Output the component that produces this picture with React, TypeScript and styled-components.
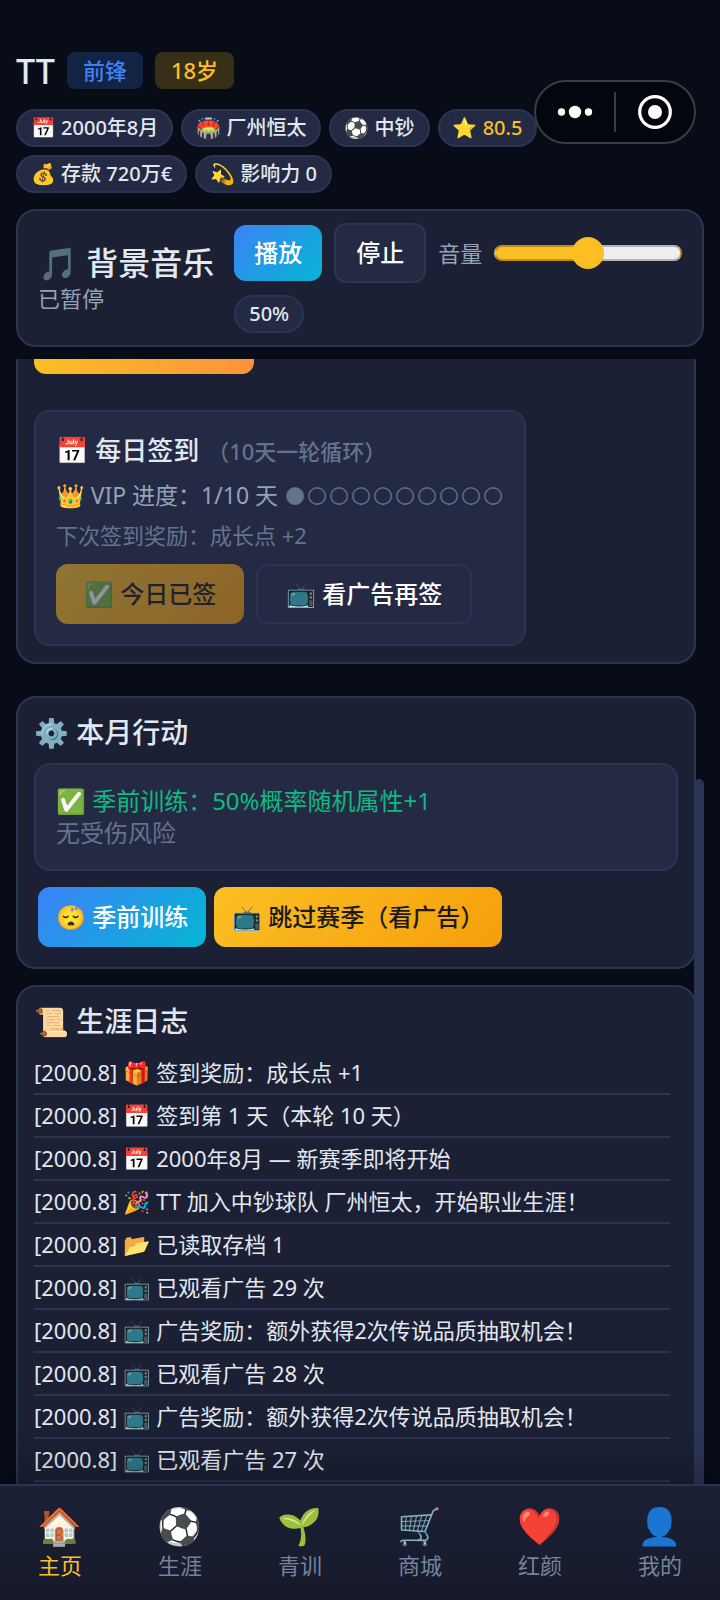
import { useState } from 'react'
import type { FC, ReactNode } from 'react'
import styled, { createGlobalStyle, css } from 'styled-components'

const GlobalStyle = createGlobalStyle`
  :root {
    --background: #080c17;
    --card: #1b2035;
    --card-raised: #242a44;
    --border: #2c3454;
    --text: #e2e8f0;
    --text-soft: #94a3b8;
    --text-muted: #64748b;
    --gold: #fbbf24;
    --blue: #3b82f6;
    --green: #10b981;
    --card-radius: 20px;
  }

  *, *::before, *::after {
    box-sizing: border-box;
  }

  body {
    background: var(--background);
    color: var(--text);
    font-family: "Noto Sans", "Noto Sans CJK SC", sans-serif;
    font-size: 22px;
    line-height: 30px;
    margin: 0;
  }

  button, input {
    font-family: inherit;
  }
`

const Shell = styled.div`
  display: flex;
  flex-direction: column;
  height: 100vh;
  overflow: hidden;
  position: relative;
`

const Emoji = styled.span`
  display: inline-block;
  font-family: "Noto Color Emoji", sans-serif;
  font-weight: 400;
  line-height: 1;
`

/* Header */

const Header = styled.header`
  display: grid;
  padding: 52px 16px 0;
  row-gap: 20px;
`

const PlayerRow = styled.div`
  align-items: center;
  column-gap: 12px;
  display: flex;
`

const PlayerName = styled.h1`
  font-size: 34px;
  font-weight: 500;
  line-height: 36px;
  margin: 0;
`

const Badge = styled.span<{ $tone: 'blue' | 'gold' }>`
  background: ${({ $tone }) => $tone === 'blue' ? '#3b82f633' : '#fbbf2433'};
  border-radius: 8px;
  color: ${({ $tone }) => $tone === 'blue' ? 'var(--blue)' : 'var(--gold)'};
  font-weight: 500;
  line-height: 37px;
  padding-inline: 16px;
`

const Chips = styled.div`
  display: flex;
  flex-wrap: wrap;
  gap: 8px;
  padding-inline-end: 160px;
`

const Chip = styled.span<{ $gold?: boolean }>`
  background: var(--card-raised);
  border: 2px solid var(--border);
  border-radius: 19px;
  color: ${({ $gold }) => $gold ? 'var(--gold)' : 'inherit'};
  font-size: 20px;
  font-weight: 500;
  line-height: 34px;
  padding-inline: 13px;
  white-space: nowrap;
`

const Capsule = styled.div`
  align-items: center;
  background: #04060d;
  border: 2px solid #3a3c44;
  border-radius: 32px;
  display: flex;
  height: 64px;
  position: absolute;
  right: 24px;
  top: 80px;
  width: 162px;
`

const CapsuleButton = styled.button`
  align-items: center;
  background: none;
  border: 0;
  color: #fff;
  display: flex;
  flex: 1;
  justify-content: center;
  padding: 0;

  & + & {
    border-inline-start: 2px solid #3a3c44;
  }
`

/* Buttons */

const buttonColors = {
  blue: css`
    background: linear-gradient(135deg, #3b82f6, #06b6d4);
    color: #fff;
  `,
  gold: css`
    background: linear-gradient(135deg, #fbbf24, #f59e0b);
    color: #1a1a1a;
  `,
  plain: css`
    background: var(--card-raised);
    border: 2px solid var(--border);
    color: #fff;
  `
}

const Button = styled.button<{ $color: keyof typeof buttonColors, $size?: 'medium' | 'wide' }>`
  border: 0;
  border-radius: 12px;
  font-size: 24px;
  font-weight: 500;
  line-height: 32px;
  min-height: 60px;
  padding: 12px ${({ $size }) => $size === 'wide' ? '28px' : '18px'};
  white-space: nowrap;
  ${({ $color }) => buttonColors[$color]}

  &:disabled {
    opacity: 0.5;
  }
`

/* Music */

const MusicCard = styled.section`
  align-items: center;
  background: var(--card);
  border: 2px solid var(--border);
  border-radius: var(--card-radius);
  column-gap: 20px;
  display: flex;
  margin: 16px 16px 12px;
  padding: 12px 20px;
`

const MusicTitle = styled.h2`
  font-size: 32px;
  font-weight: 500;
  line-height: 40px;
  margin: 0;
  white-space: nowrap;
`

const MusicState = styled.p`
  color: var(--text-soft);
  margin: 0;
`

const MusicControls = styled.div`
  align-items: center;
  display: flex;
  flex: 1;
  flex-wrap: wrap;
  gap: 12px;
`

const MusicButton = styled(Button)<{ $short?: boolean }>`
  min-height: ${({ $short }) => $short ? '56px' : '60px'};
  padding-inline: 20px;
`

const VolumeLabel = styled.label`
  color: var(--text-soft);
`

const VolumeSlider = styled.input`
  appearance: none;
  background: none;
  flex: 1 1 180px;
  height: 32px;
  margin: 0;
  min-width: 0;

  &::-webkit-slider-runnable-track {
    background: linear-gradient(to right, var(--gold) 50%, #efefef 50%);
    border: 2px solid #00000040;
    border-radius: 8px;
    height: 16px;
  }

  &::-webkit-slider-thumb {
    appearance: none;
    background: var(--gold);
    border-radius: 50%;
    height: 32px;
    margin-top: -10px;
    width: 32px;
  }
`

/* Content */

const Content = styled.main`
  flex: 1;
  min-height: 0;
  overflow: hidden;
  padding-inline: 16px 24px;
  position: relative;
`

const ScrollThumb = styled.div`
  background: var(--border);
  border-radius: 5px 5px 0 0;
  bottom: 0;
  position: absolute;
  right: 16px;
  top: 420px;
  width: 10px;
`

const Card = styled.section<{ $continued?: boolean }>`
  background: var(--card);
  border: 2px solid var(--border);
  border-radius: var(--card-radius);
  margin-block-end: 16px;
  padding: 16px;

  ${({ $continued }) => $continued && css`
    border-start-end-radius: 0;
    border-start-start-radius: 0;
    border-top: 0;
    margin-block-end: 32px;
    padding-block-start: 0;
  `}
`

const CardHeading = styled.h2`
  font-size: 28px;
  font-weight: 500;
  line-height: 37px;
  margin: 0 0 12px;
`

const RewardBar = styled.div`
  background: linear-gradient(100deg, #fbbf24, #fb923c);
  border-radius: 0 0 12px 12px;
  height: 15px;
  margin-block-end: 36px;
  width: 220px;
`

const Panel = styled.div<{ $fit?: boolean }>`
  background: var(--card-raised);
  border: 2px solid var(--border);
  border-radius: 16px;
  padding: 20px;
  width: ${({ $fit }) => $fit ? 'fit-content' : 'auto'};
`

const SignInHeading = styled.h3`
  font-size: 26px;
  font-weight: 500;
  line-height: 36px;
  margin: 0 0 9px;

  small {
    color: var(--text-muted);
    font-size: 22px;
    margin-inline-start: 8px;
  }
`

const Progress = styled.p`
  color: var(--text-soft);
  font-size: 23px;
  line-height: 34px;
  margin: 0 0 8px;
`

const Dot = styled.span`
  color: var(--text-muted);
  display: inline-block;
  font-family: "DejaVu Sans", sans-serif;
  line-height: 1;
  text-align: center;
  vertical-align: 2px;
  width: 22px;
`

const NextReward = styled.p`
  color: var(--text-muted);
  margin: 0 0 14px;
`

const SignInButtons = styled.div`
  column-gap: 12px;
  display: flex;
`

const ActionText = styled.p<{ $color: string }>`
  color: ${({ $color }) => $color};
  font-size: 24px;
  line-height: 32px;
  margin: 0;
`

const ActionButtons = styled.div`
  column-gap: 8px;
  display: flex;
  padding: 16px 4px 4px;
`

const LogList = styled.ul`
  list-style-type: none;
  margin: 0;
  padding: 0 8px 0 0;
`

const LogItem = styled.li`
  border-block-end: 2px solid var(--border);
  line-height: 29px;
  padding-block: 6px;
`

/* Navigation */

const Nav = styled.nav`
  background: linear-gradient(#1b2035, #161a2c);
  border-block-start: 2px solid var(--border);
  box-shadow: 0 -8px 40px 0 #00000050;
  display: flex;
  position: relative;
`

const NavLink = styled.a<{ $active: boolean }>`
  align-items: center;
  color: ${({ $active }) => $active ? 'var(--gold)' : '#76839a'};
  display: flex;
  flex: 1;
  flex-direction: column;
  line-height: 30px;
  padding-block: 18px 20px;
  text-decoration: none;
`

const NavIcon = styled(Emoji)`
  font-size: 36px;
  line-height: 46px;
`

const logs = [
  { icon: '🎁', text: '签到奖励：成长点 +1' },
  { icon: '📅', text: '签到第 1 天（本轮 10 天）' },
  { icon: '📅', text: '2000年8月 — 新赛季即将开始' },
  { icon: '🎉', text: 'TT 加入中钞球队 厂州恒太，开始职业生涯！' },
  { icon: '📂', text: '已读取存档 1' },
  { icon: '📺', text: '已观看广告 29 次' },
  { icon: '📺', text: '广告奖励：额外获得2次传说品质抽取机会！' },
  { icon: '📺', text: '已观看广告 28 次' },
  { icon: '📺', text: '广告奖励：额外获得2次传说品质抽取机会！' },
  { icon: '📺', text: '已观看广告 27 次' }
]

const pages = [
  { icon: '🏠', id: 'home', label: '主页' },
  { icon: '⚽', id: 'career', label: '生涯' },
  { icon: '🌱', id: 'youth', label: '青训' },
  { icon: '🛒', id: 'shop', label: '商城' },
  { icon: '❤️', id: 'love', label: '红颜' },
  { icon: '👤', id: 'me', label: '我的' }
]

const WithEmoji: FC<{ icon: string, children: ReactNode }> = ({ icon, children }) => (
  <>
    <Emoji aria-hidden="true">{icon}</Emoji> {children}
  </>
)

const PlayerHeader: FC = () => (
  <Header>
    <PlayerRow>
      <PlayerName>TT</PlayerName>
      <Badge $tone="blue">前锋</Badge>
      <Badge $tone="gold">18岁</Badge>
    </PlayerRow>
    <Chips>
      <Chip><WithEmoji icon="📅">2000年8月</WithEmoji></Chip>
      <Chip><WithEmoji icon="🏟️">厂州恒太</WithEmoji></Chip>
      <Chip><WithEmoji icon="⚽">中钞</WithEmoji></Chip>
      <Chip $gold><WithEmoji icon="⭐">80.5</WithEmoji></Chip>
      <Chip><WithEmoji icon="💰">存款 720万€</WithEmoji></Chip>
      <Chip><WithEmoji icon="💫">影响力 0</WithEmoji></Chip>
    </Chips>
  </Header>
)

const AppCapsule: FC = () => (
  <Capsule>
    <CapsuleButton aria-label="More" type="button">
      <svg fill="currentColor" height="40" viewBox="0 0 40 40" width="40">
        <circle cx="6.5" cy="20" r="3.7" />
        <circle cx="20" cy="20" r="6.2" />
        <circle cx="33.5" cy="20" r="3.7" />
      </svg>
    </CapsuleButton>
    <CapsuleButton aria-label="Close" type="button">
      <svg fill="none" height="40" viewBox="0 0 40 40" width="40">
        <circle cx="20" cy="20" r="15.3" stroke="currentColor" strokeWidth="3.2" />
        <circle cx="20" cy="20" fill="currentColor" r="7" />
      </svg>
    </CapsuleButton>
  </Capsule>
)

const MusicPlayer: FC = () => {
  const [volume, setVolume] = useState(50)

  return (
    <MusicCard>
      <div>
        <MusicTitle><WithEmoji icon="🎵">背景音乐</WithEmoji></MusicTitle>
        <MusicState>已暂停</MusicState>
      </div>
      <MusicControls>
        <MusicButton $color="blue" $short type="button">播放</MusicButton>
        <MusicButton $color="plain" type="button">停止</MusicButton>
        <VolumeLabel htmlFor="volume">音量</VolumeLabel>
        <VolumeSlider
          id="volume"
          max={100}
          min={0}
          onChange={(event) => setVolume(Number(event.target.value))}
          type="range"
          value={volume}
        />
        <Chip>{volume}%</Chip>
      </MusicControls>
    </MusicCard>
  )
}

const App: FC = () => (
  <>
    <GlobalStyle />
    <Shell>
      <PlayerHeader />
      <AppCapsule />
      <MusicPlayer />
      <Content>
        <Card $continued>
          <RewardBar />
          <Panel $fit>
            <SignInHeading>
              <WithEmoji icon="📅">每日签到</WithEmoji>
              <small>（10天一轮循环）</small>
            </SignInHeading>
            <Progress>
              <WithEmoji icon="👑">VIP 进度：1/10 天</WithEmoji>
              {' '}
              {[...'●○○○○○○○○○'].map((dot, index) => <Dot key={index}>{dot}</Dot>)}
            </Progress>
            <NextReward>下次签到奖励：成长点 +2</NextReward>
            <SignInButtons>
              <Button $color="gold" $size="wide" disabled type="button">
                <WithEmoji icon="✅">今日已签</WithEmoji>
              </Button>
              <Button $color="plain" $size="wide" type="button">
                <WithEmoji icon="📺">看广告再签</WithEmoji>
              </Button>
            </SignInButtons>
          </Panel>
        </Card>
        <Card>
          <CardHeading><WithEmoji icon="⚙️">本月行动</WithEmoji></CardHeading>
          <Panel>
            <ActionText $color="var(--green)">
              <WithEmoji icon="✅">季前训练：50%概率随机属性+1</WithEmoji>
            </ActionText>
            <ActionText $color="var(--text-muted)">无受伤风险</ActionText>
          </Panel>
          <ActionButtons>
            <Button $color="blue" type="button">
              <WithEmoji icon="😴">季前训练</WithEmoji>
            </Button>
            <Button $color="gold" type="button">
              <WithEmoji icon="📺">跳过赛季（看广告）</WithEmoji>
            </Button>
          </ActionButtons>
        </Card>
        <Card>
          <CardHeading><WithEmoji icon="📜">生涯日志</WithEmoji></CardHeading>
          <LogList>
            {logs.map(({ icon, text }, index) => (
              <LogItem key={index}>
                [2000.8] <WithEmoji icon={icon}>{text}</WithEmoji>
              </LogItem>
            ))}
          </LogList>
        </Card>
        <ScrollThumb />
      </Content>
      <Nav>
        {pages.map(({ icon, id, label }) => (
          <NavLink $active={id === 'home'} href={`#${id}`} key={id}>
            <NavIcon aria-hidden="true">{icon}</NavIcon>
            {label}
          </NavLink>
        ))}
      </Nav>
    </Shell>
  </>
)

export default App
